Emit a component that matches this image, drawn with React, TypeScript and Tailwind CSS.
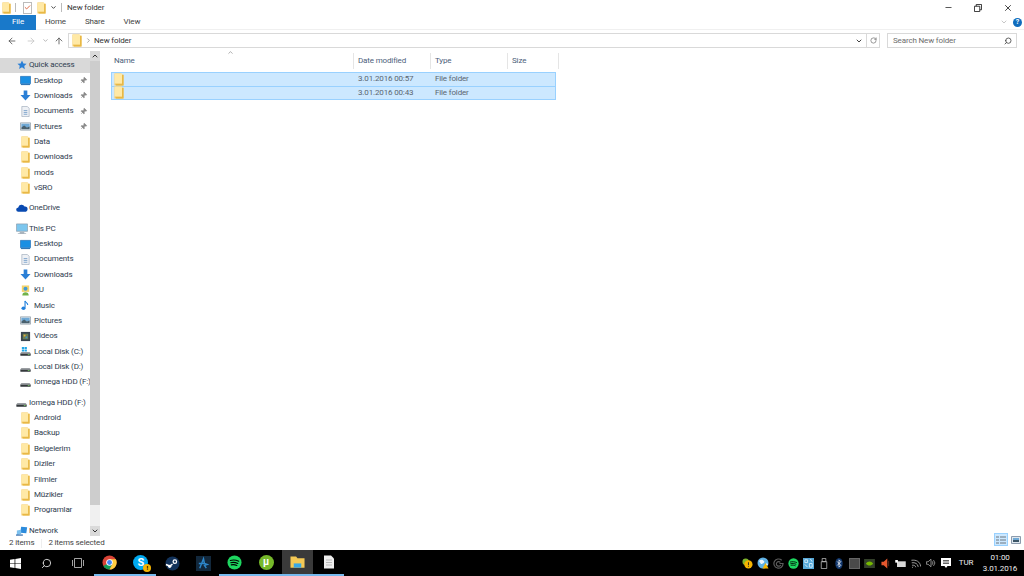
import React from "react";
import { ArrowLeft, ArrowRight, ArrowUp, ChevronDown, ChevronRight, ChevronUp, RotateCw, Search, Pin, Minus, X, Check } from "lucide-react";

const Folder = ({ small = false }: { small?: boolean }) => (
  <svg viewBox="0 0 10 13" className={small ? "h-[12px] w-[9px] shrink-0" : "h-[13px] w-[10px] shrink-0"}>
    <path d="M0.500 0.500h7v1h2v11h-9z" fill="#f2c661" />
    <path d="M0.500 0.500h7.500v10h-7.500z" fill="#ffe9a6" />
    <path d="M8 2h1.500v10.500H2v-1.500h6z" fill="#e8b845" />
  </svg>
);

const Desktop = () => (
  <svg viewBox="0 0 12 12" className="h-[11px] w-[11px] shrink-0">
    <path d="M0.500 1.500h11v8h-11z" fill="#1a8fe3" stroke="#0d5ea8" strokeWidth="0.600" />
    <path d="M1 10h10v1H1z" fill="#0d5ea8" />
  </svg>
);

const Down = () => (
  <svg viewBox="0 0 12 12" className="h-[11px] w-[11px] shrink-0">
    <path d="M4 0.500h4v5h3.500L6 11.500 0.500 5.500H4z" fill="#2a7fd6" />
  </svg>
);

const Docs = () => (
  <svg viewBox="0 0 12 12" className="h-[11px] w-[11px] shrink-0">
    <path d="M2 0.500h6l2 2v9H2z" fill="#eef1f5" stroke="#8c9bad" strokeWidth="0.600" />
    <path d="M4 5h4M4 7h4M4 9h4" stroke="#5f8fc0" strokeWidth="0.800" />
  </svg>
);

const Pics = () => (
  <svg viewBox="0 0 12 12" className="h-[11px] w-[11px] shrink-0">
    <path d="M0.500 2h11v8h-11z" fill="#e6edf3" stroke="#6c7a88" strokeWidth="0.600" />
    <path d="M1.500 3h9v4h-9z" fill="#6fa9d6" />
    <path d="M1.500 9V7l3-2 3 2 3-1v3z" fill="#48606e" />
  </svg>
);

const Ku = () => (
  <svg viewBox="0 0 12 12" className="h-[11px] w-[11px] shrink-0">
    <path d="M2 0.500h8v7H2z" fill="#f4d36a" />
    <circle cx="6" cy="4" r="2.200" fill="#3f9ad6" />
    <path d="M2.500 11.500c0-2.500 1.500-3.500 3.500-3.500s3.500 1 3.500 3.500z" fill="#72b34a" />
  </svg>
);

const Music = () => (
  <svg viewBox="0 0 12 12" className="h-[11px] w-[11px] shrink-0">
    <path d="M5.500 1v7.500" stroke="#1f7fdc" strokeWidth="1.200" />
    <path d="M5.500 1c.5 2 3 2 3 4.500" stroke="#1f7fdc" strokeWidth="1.100" fill="none" />
    <ellipse cx="3.800" cy="9" rx="2.200" ry="1.900" fill="#1f7fdc" />
  </svg>
);

const Videos = () => (
  <svg viewBox="0 0 12 12" className="h-[11px] w-[11px] shrink-0">
    <path d="M1 1h10v10H1z" fill="#39444f" />
    <path d="M3 3h6v6H3z" fill="#6a7f52" />
    <path d="M4 4h2v2H4z" fill="#e3a93e" />
    <path d="M6 6h2v2H6z" fill="#3f8fc9" />
  </svg>
);

const Disk = ({ win = false }: { win?: boolean }) => (
  <svg viewBox="0 0 12 12" className="h-[11px] w-[11px] shrink-0">
    <path d="M1.500 6.500h9l1 1.500v2.500H0.500V8z" fill="#9a9ea2" />
    <path d="M0.500 8.500h11v2H0.500z" fill="#34383b" />
    <path d="M8.500 9h2v.800h-2z" fill="#7ddc6a" />
    {win && <path d="M2 1h2.500v2.300H2zM5 1h2.500v2.300H5zM2 3.800h2.500v2.200H2zM5 3.800h2.500v2.200H5z" fill="#22a7e8" />}
  </svg>
);

const OneDrive = () => (
  <svg viewBox="0 0 14 10" className="h-[10px] w-[12px] shrink-0">
    <path d="M3 9.500a2.600 2.600 0 0 1-.4-5.200A4 4 0 0 1 10 3.200 3.200 3.200 0 0 1 13.500 6.500c0 1.800-1.300 3-3 3z" fill="#094ab1" />
  </svg>
);

const Monitor = () => (
  <svg viewBox="0 0 13 12" className="h-[12px] w-[12px] shrink-0">
    <path d="M0.500 0.500h12v8h-12z" fill="#7cc6ee" stroke="#8b98a5" strokeWidth="0.700" />
    <path d="M4 9h5v1.500h2v1H2v-1h2z" fill="#a9b4be" />
  </svg>
);

const Network = () => (
  <svg viewBox="0 0 14 12" className="h-[12px] w-[12px] shrink-0">
    <path d="M6 1l7 .5-1 7L5 8z" fill="#2c8bdc" />
    <path d="M1 5.500l5-1v5l-5 1.500z" fill="#7cc0ee" />
    <path d="M0 10h8v1.500H0z" fill="#3f74b0" />
  </svg>
);

const QuickStar = () => (
  <svg viewBox="0 0 12 12" className="h-[10px] w-[10px] shrink-0">
    <path d="M6 0.500l1.700 3.600 3.800.5-2.800 2.700.7 3.900L6 8.800l-3.400 1.900.7-3.900L0.500 4.600l3.800-.5z" fill="#2a7fd6" />
  </svg>
);

type NavItem = { label: string; icon: React.ReactNode; pin?: boolean };

const NavRow = ({ item }: { item: NavItem }) => (
  <div className="relative flex h-[15.36px] items-center gap-[3px] pl-[20px]">
    <span className="flex w-[11px] justify-center">{item.icon}</span>
    <span className="whitespace-nowrap">{item.label}</span>
    {item.pin && <Pin className="absolute left-[80px] h-[7px] w-[7px] rotate-45 fill-[#8a8a8a] text-[#8a8a8a]" strokeWidth={2} />}
  </div>
);

const NavHead = ({ label, icon, active = false }: { label: string; icon: React.ReactNode; active?: boolean }) => (
  <div className={`flex h-[15.36px] items-center gap-[1px] pl-[15px] ${active ? "bg-[#d9d9d9]" : ""}`}>
    <span className="flex w-[13px] justify-center">{icon}</span>
    <span className="whitespace-nowrap">{label}</span>
  </div>
);

const quick: NavItem[] = [
  { label: "Desktop", icon: <Desktop />, pin: true },
  { label: "Downloads", icon: <Down />, pin: true },
  { label: "Documents", icon: <Docs />, pin: true },
  { label: "Pictures", icon: <Pics />, pin: true },
  { label: "Data", icon: <Folder small /> },
  { label: "Downloads", icon: <Folder small /> },
  { label: "mods", icon: <Folder small /> },
  { label: "vSRO", icon: <Folder small /> },
];

const pc: NavItem[] = [
  { label: "Desktop", icon: <Desktop /> },
  { label: "Documents", icon: <Docs /> },
  { label: "Downloads", icon: <Down /> },
  { label: "KU", icon: <Ku /> },
  { label: "Music", icon: <Music /> },
  { label: "Pictures", icon: <Pics /> },
  { label: "Videos", icon: <Videos /> },
  { label: "Local Disk (C:)", icon: <Disk win /> },
  { label: "Local Disk (D:)", icon: <Disk /> },
  { label: "Iomega HDD (F:)", icon: <Disk /> },
];

const drive: NavItem[] = ["Android", "Backup", "Belgelerim", "Diziler", "Filmler", "Müzikler", "Programlar"].map((label) => ({
  label,
  icon: <Folder small />,
}));

const Sidebar = () => (
  <div className="flex w-[100px] shrink-0 text-[#2f3d4f]">
    <div className="relative w-[90px] overflow-hidden pt-[6.500px]">
      <NavHead label="Quick access" icon={<QuickStar />} active />
      {quick.map((item, i) => (
        <NavRow key={i} item={item} />
      ))}
      <div className="h-[5px]" />
      <NavHead label="OneDrive" icon={<OneDrive />} />
      <div className="h-[5px]" />
      <NavHead label="This PC" icon={<Monitor />} />
      {pc.map((item, i) => (
        <NavRow key={i} item={item} />
      ))}
      <div className="h-[5px]" />
      <NavHead label="Iomega HDD (F:)" icon={<Disk />} />
      {drive.map((item, i) => (
        <NavRow key={i} item={item} />
      ))}
      <div className="h-[5px]" />
      <NavHead label="Network" icon={<Network />} />
    </div>
    <div className="flex w-[10px] flex-col bg-[#f0f0f0]">
      <div className="flex h-[10px] items-center justify-center bg-[#dadada]">
        <ChevronUp className="h-[8px] w-[8px] text-[#333]" strokeWidth={3} />
      </div>
      <div className="h-[444px] bg-[#cdcdcd]" />
      <div className="flex-1" />
      <div className="flex h-[10px] items-center justify-center bg-[#dadada]">
        <ChevronDown className="h-[8px] w-[8px] text-[#333]" strokeWidth={3} />
      </div>
    </div>
  </div>
);

const HeaderCell = ({ label, cls }: { label: string; cls: string }) => (
  <div className={`flex h-[16px] items-center border-r border-[#e5e5e5] ${cls}`}>{label}</div>
);

const FileRow = ({ date, first = false }: { date: string; first?: boolean }) => (
  <div className={`flex h-[14.500px] items-center border border-[#99d1ff] bg-[#cce8ff] text-[#5a6570] ${first ? "" : "-mt-[1px]"}`}>
    <div className="flex w-[241px] items-center pl-[2px]">
      <Folder />
    </div>
    <div className="w-[77px] pl-[5px] whitespace-nowrap">{date}</div>
    <div className="pl-[5px]">File folder</div>
  </div>
);

const TitleBar = () => (
  <div className="flex h-[15px] items-center pl-[2px] text-[#333]">
    <Folder small />
    <div className="ml-[4px] h-[9px] w-px bg-[#bbb]" />
    <div className="ml-[7px] flex h-[12px] w-[9px] items-center justify-center border border-[#bbb] bg-white">
      <Check className="h-[7px] w-[7px] text-[#d8542c]" strokeWidth={3} />
    </div>
    <div className="ml-[5px]">
      <Folder small />
    </div>
    <ChevronDown className="ml-[4px] h-[7px] w-[7px] text-[#333]" strokeWidth={3} />
    <div className="ml-[4px] h-[9px] w-px bg-[#bbb]" />
    <span className="ml-[5px]">New folder</span>
    <div className="ml-auto flex items-center gap-[21px] pr-[11px]">
      <Minus className="h-[9px] w-[9px] text-[#222]" />
      <svg viewBox="0 0 9 9" className="h-[8px] w-[8px]">
        <path d="M0.500 2.500h6v6h-6zM2.500 2.500v-2h6v6h-2" fill="none" stroke="#222" strokeWidth="1" />
      </svg>
      <X className="h-[10px] w-[10px] text-[#222]" />
    </div>
  </div>
);

const Ribbon = () => (
  <div className="flex h-[15px] items-center border-b border-[#f0f0f0] text-[#444]">
    <div className="flex h-[15px] w-[36px] items-center justify-center bg-[#1979ca] text-white">File</div>
    <div className="ml-[9px]">Home</div>
    <div className="ml-[19px]">Share</div>
    <div className="ml-[19px]">View</div>
    <div className="ml-auto flex items-center gap-[5px] pr-[2px]">
      <ChevronDown className="h-[8px] w-[8px] text-[#aaa]" />
      <div className="flex h-[9px] w-[9px] items-center justify-center rounded-full bg-[#0f6cbd] text-[7px] font-bold leading-none text-white">?</div>
    </div>
  </div>
);

const AddressBar = () => (
  <div className="flex h-[21px] items-center text-[#333]">
    <ArrowLeft className="ml-[7px] h-[10px] w-[10px] text-[#555]" />
    <ArrowRight className="ml-[9px] h-[10px] w-[10px] text-[#c4c4c4]" />
    <ChevronDown className="ml-[6px] h-[7px] w-[7px] text-[#888]" />
    <ArrowUp className="ml-[5px] h-[10px] w-[10px] text-[#555]" />
    <div className="ml-[4px] flex h-[15px] w-[812px] items-center border border-[#d9d9d9]">
      <div className="ml-[3px]">
        <Folder />
      </div>
      <ChevronRight className="ml-[3px] h-[7px] w-[7px] text-[#666]" />
      <span className="ml-[2px]">New folder</span>
      <ChevronDown className="ml-auto mr-[3px] h-[8px] w-[8px] text-[#444]" strokeWidth={3} />
      <div className="flex h-full w-[13px] items-center justify-center border-l border-[#d9d9d9]">
        <RotateCw className="h-[7px] w-[7px] text-[#555]" />
      </div>
    </div>
    <div className="ml-[7px] flex h-[15px] w-[130px] items-center justify-between border border-[#d9d9d9] pl-[5px] pr-[4px] text-[#6d6d6d]">
      <span>Search New folder</span>
      <Search className="h-[8px] w-[8px] -scale-x-100 text-[#444]" strokeWidth={2.500} />
    </div>
  </div>
);

const FileArea = () => (
  <div className="relative flex-1 pl-[11px] pt-[2px] text-[#4c607a]">
    <ChevronUp className="absolute left-[127px] top-[-2px] h-[7px] w-[7px] text-[#777]" />
    <div className="flex">
      <HeaderCell label="Name" cls="w-[243px] pl-[3px]" />
      <HeaderCell label="Date modified" cls="w-[77px] pl-[4px]" />
      <HeaderCell label="Type" cls="w-[77px] pl-[4px]" />
      <HeaderCell label="Size" cls="w-[51px] pl-[4px]" />
    </div>
    <div className="mt-[3px] w-[445px]">
      <FileRow date="3.01.2016 00:57" first />
      <FileRow date="3.01.2016 00:43" />
    </div>
  </div>
);

const StatusBar = () => (
  <div className="flex h-[14px] items-center text-[#444]">
    <span className="ml-[9px]">2 items</span>
    <div className="ml-[7px] h-[9px] w-px bg-[#eee]" />
    <span className="ml-[6px]">2 items selected</span>
    <div className="ml-auto mb-[7px] flex items-center gap-[3px] pr-[3px]">
      <div className="flex h-[13px] w-[14px] items-center justify-center border border-[#99d1ff] bg-[#cce8ff]">
        <svg viewBox="0 0 10 8" className="h-[8px] w-[10px]">
          <path d="M0 1h3M4 1h6M0 4h3M4 4h6M0 7h3M4 7h6" stroke="#6c7680" strokeWidth="1" />
        </svg>
      </div>
      <svg viewBox="0 0 10 8" className="h-[8px] w-[10px]">
        <path d="M0.500 0.500h9v7h-9z" fill="#dfe7ee" stroke="#8c9bad" />
        <path d="M2 2h6v2H2z" fill="#6fa9d6" />
        <path d="M2 4h6v2H2z" fill="#3c5566" />
      </svg>
    </div>
  </div>
);

const Underlined = ({ children, active = false }: { children: React.ReactNode; active?: boolean }) => (
  <div className={`flex h-[26px] w-[31.300px] items-center justify-center border-b-2 border-[#76b9ed] ${active ? "bg-[#3a3a3a]" : ""}`}>{children}</div>
);

const Plain = ({ children }: { children: React.ReactNode }) => (
  <div className="flex h-[26px] w-[31.300px] items-center justify-center">{children}</div>
);

const Tray = ({ children }: { children: React.ReactNode }) => (
  <div className="flex w-[15.300px] items-center justify-center">{children}</div>
);

const Chrome = () => (
  <svg viewBox="0 0 16 16" className="h-[15px] w-[15px]">
    <circle cx="8" cy="8" r="7.500" fill="#db4437" />
    <path d="M8 8L1.500 11.800A7.500 7.500 0 0 0 8 15.500L11.500 9z" fill="#0f9d58" />
    <path d="M8 4.500h6.800A7.500 7.500 0 0 1 8 15.500L11.500 9z" fill="#ffcd40" />
    <circle cx="8" cy="8" r="3.500" fill="#fff" />
    <circle cx="8" cy="8" r="2.600" fill="#4285f4" />
  </svg>
);

const Skype = () => (
  <div className="relative flex h-[15px] w-[15px] items-center justify-center rounded-full bg-[#00a9f0] text-[11px] font-bold leading-none text-white">
    S
    <span className="absolute bottom-[-2px] right-[-3px] flex h-[8px] w-[8px] items-center justify-center rounded-full bg-[#f5b400] text-[6px] leading-none text-black">!</span>
  </div>
);

const Steam = () => (
  <svg viewBox="0 0 16 16" className="h-[15px] w-[15px]">
    <circle cx="8" cy="8" r="7.500" fill="#12325a" />
    <circle cx="10.500" cy="6" r="2.500" fill="#fff" />
    <circle cx="10.500" cy="6" r="1.200" fill="#12325a" />
    <path d="M1 9l4 1.700 3-2" stroke="#fff" strokeWidth="1.600" fill="none" />
    <circle cx="5" cy="11" r="1.800" fill="#fff" />
  </svg>
);

const BlueApp = () => (
  <svg viewBox="0 0 16 16" className="h-[15px] w-[15px]">
    <path d="M0 0h16v16H0z" fill="#12283c" />
    <path d="M4 13L8 3l1 5 3 1-3 1 2 3M3 8h6" stroke="#2d86c9" strokeWidth="1.500" fill="none" />
  </svg>
);

const Spotify = ({ size = "h-[15px] w-[15px]" }: { size?: string }) => (
  <svg viewBox="0 0 16 16" className={size}>
    <circle cx="8" cy="8" r="7.500" fill="#1ed760" />
    <path d="M3.500 5.800c3-.8 6-.6 9 .8M4 8.200c2.500-.6 5-.4 7.500.8M4.500 10.500c2-.4 4-.3 6 .7" stroke="#000" strokeWidth="1.200" fill="none" strokeLinecap="round" />
  </svg>
);

const TrayIcons = () => (
  <>
    <Tray>
      <svg viewBox="0 0 12 12" className="h-[11px] w-[11px]">
        <circle cx="4" cy="4" r="3.500" fill="#7fb52c" />
        <circle cx="7" cy="7" r="4.500" fill="#f5b400" />
        <path d="M6.500 4.500h1v3h-1zM6.500 8.500h1v1h-1z" fill="#222" />
      </svg>
    </Tray>
    <Tray>
      <svg viewBox="0 0 12 12" className="h-[12px] w-[12px]">
        <circle cx="6" cy="6" r="5.500" fill="#5fb2e6" />
        <path d="M2 4c2-2 4-1 5 0s-1 3-3 3zM8 8l2-2 1 2z" fill="#eaf5fc" />
        <path d="M8.500 6l3 5.500h-6z" fill="#f5b400" />
      </svg>
    </Tray>
    <Tray>
      <svg viewBox="0 0 12 12" className="h-[11px] w-[11px]">
        <path d="M9.500 2.500A5 5 0 1 0 11 6H7M8 4.700A2.500 2.500 0 1 0 8.500 7.500" fill="none" stroke="#5c5c5c" strokeWidth="1.300" />
      </svg>
    </Tray>
    <Tray>
      <Spotify size="h-[11px] w-[11px]" />
    </Tray>
    <Tray>
      <svg viewBox="0 0 12 12" className="h-[11px] w-[11px]">
        <path d="M0 0h12v12H0z" fill="#58a9d8" />
        <path d="M2 2h3v3H2zM7 6h3v4H7zM8 1l2 3M2 7l3 3" stroke="#d9eefa" strokeWidth="1" fill="none" />
      </svg>
    </Tray>
    <Tray>
      <svg viewBox="0 0 8 12" className="h-[11px] w-[8px]">
        <path d="M2 0.500h4V4H2zM1 4h6v7.500H1z" fill="none" stroke="#c8c8c8" strokeWidth="0.800" />
      </svg>
    </Tray>
    <Tray>
      <svg viewBox="0 0 8 12" className="h-[11px] w-[8px]">
        <ellipse cx="4" cy="6" rx="4" ry="6" fill="#12386e" />
        <path d="M2 3.800l4 4.200-2 2V2l2 2-4 4.200" fill="none" stroke="#fff" strokeWidth="0.800" />
      </svg>
    </Tray>
    <Tray>
      <div className="h-[11px] w-[11px] border border-[#666] bg-[#4a4a4a]" />
    </Tray>
    <Tray>
      <svg viewBox="0 0 12 10" className="h-[9px] w-[11px]">
        <path d="M0 0h12v10H0z" fill="#33402a" />
        <path d="M2 5c2-3 6-3 8 0-2 3-6 3-8 0z" fill="#76b900" />
      </svg>
    </Tray>
    <Tray>
      <svg viewBox="0 0 10 12" className="h-[11px] w-[9px]">
        <path d="M7 0.500v11L3 8H0.500V4H3z" fill="#e4572e" />
        <path d="M8.500 3v6" stroke="#5a2a1e" strokeWidth="1" />
      </svg>
    </Tray>
    <Tray>
      <svg viewBox="0 0 12 8" className="h-[7px] w-[11px]">
        <path d="M2 1.500h10V8H2z" fill="#d8d8d8" />
        <path d="M0 0h3v3H0z" fill="#fff" />
      </svg>
    </Tray>
    <Tray>
      <svg viewBox="0 0 12 12" className="h-[10px] w-[10px]">
        <path d="M1 11a1 1 0 0 1 1-1M1 8c2 0 4 1 4 3M1 5c4 0 7 2 7 6M1 2c6 0 10 3 10 9" fill="none" stroke="#aeaeae" strokeWidth="1" transform="rotate(-8 6 6)" />
      </svg>
    </Tray>
    <Tray>
      <svg viewBox="0 0 12 12" className="h-[10px] w-[10px]">
        <path d="M0.500 4.500h2L6 1.500v9l-3.500-3h-2z" fill="none" stroke="#c8c8c8" strokeWidth="0.800" />
        <path d="M7.500 4a3 3 0 0 1 0 4M9 2.500a5 5 0 0 1 0 7" fill="none" stroke="#c8c8c8" strokeWidth="0.800" />
      </svg>
    </Tray>
    <Tray>
      <svg viewBox="0 0 12 12" className="h-[12px] w-[12px]">
        <path d="M1 1h10v8H7.500L6 11 4.500 9H1z" fill="#fff" />
        <path d="M3 3.500h6M3 5h6M3 6.500h6" stroke="#222" strokeWidth="0.700" />
      </svg>
    </Tray>
  </>
);

const Taskbar = () => (
  <div className="flex h-[26px] items-center bg-black text-white">
    <Plain>
      <svg viewBox="0 0 12 12" className="h-[11px] w-[11px]">
        <path d="M0 1.800l5-.7v4.500H0zM5.800 1l6.200-1v5.600H5.800zM0 6.400h5v4.500l-5-.7zM5.800 6.400H12V12l-6.200-1z" fill="#fff" />
      </svg>
    </Plain>
    <Plain>
      <Search className="h-[11px] w-[11px] -scale-x-100 text-[#ddd]" />
    </Plain>
    <Plain>
      <svg viewBox="0 0 14 10" className="h-[10px] w-[14px]">
        <path d="M3.500 0.500h7v9h-7zM1.500 2v6M12.500 2v6" fill="none" stroke="#ccc" strokeWidth="0.800" />
      </svg>
    </Plain>
    <Underlined>
      <Chrome />
    </Underlined>
    <Underlined>
      <Skype />
    </Underlined>
    <Plain>
      <Steam />
    </Plain>
    <Plain>
      <BlueApp />
    </Plain>
    <Underlined>
      <Spotify />
    </Underlined>
    <Underlined>
      <div className="flex h-[15px] w-[15px] items-center justify-center rounded-full bg-[#76b82a] text-[10px] font-bold leading-none">µ</div>
    </Underlined>
    <Underlined active>
      <svg viewBox="0 0 16 14" className="h-[14px] w-[15px]">
        <path d="M0.500 1h6l1.500 2h7.500v10H0.500z" fill="#f5c955" />
        <path d="M4 8.500h8v4.500H4z" fill="#38a8e6" />
      </svg>
    </Underlined>
    <Underlined>
      <svg viewBox="0 0 12 14" className="h-[14px] w-[12px]">
        <path d="M1 0.500h7l3 3V13.500H1z" fill="#eee" />
        <path d="M3 5h6M3 7.500h6M3 10h6" stroke="#aaa" strokeWidth="0.800" />
      </svg>
    </Underlined>
    <div className="ml-auto flex items-center text-[#eee]">
      <TrayIcons />
      <span className="ml-[2px] w-[20px] text-center">TUR</span>
      <div className="flex w-[48px] flex-col items-center leading-[11px]">
        <span>01:00</span>
        <span>3.01.2016</span>
      </div>
    </div>
  </div>
);

export default function App() {
  return (
    <div className="flex h-[576px] w-[1024px] flex-col overflow-hidden bg-white font-['Roboto','Noto_Sans',sans-serif] text-[8px] tracking-[-0.150px]">
      <TitleBar />
      <Ribbon />
      <AddressBar />
      <div className="flex h-[485px]">
        <Sidebar />
        <FileArea />
      </div>
      <StatusBar />
      <Taskbar />
    </div>
  );
}
